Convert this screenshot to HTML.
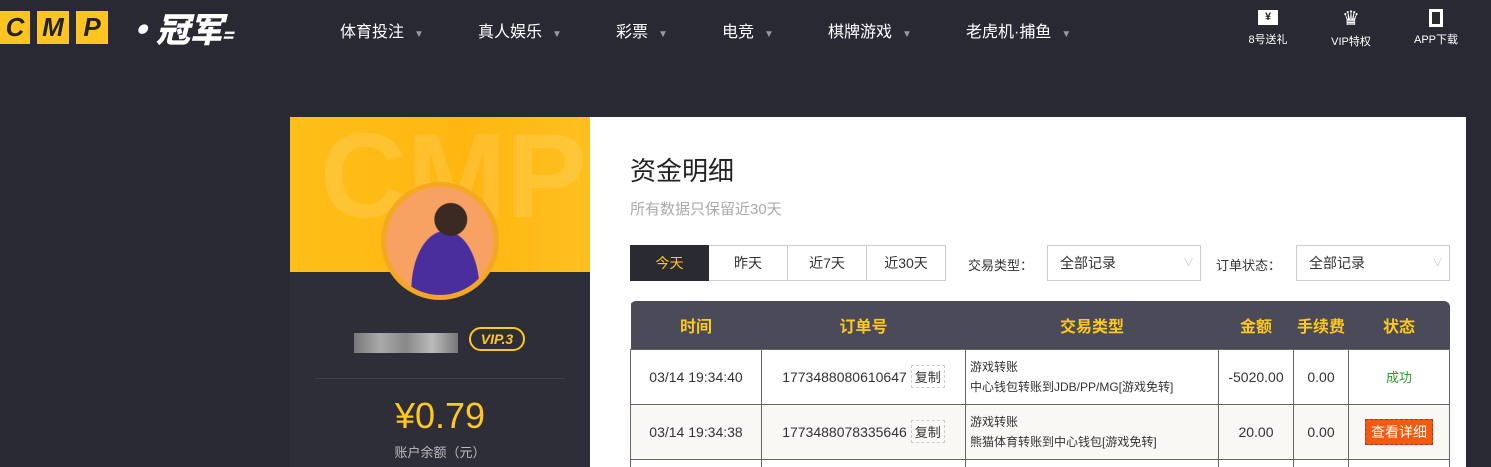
<!DOCTYPE html><html><head><meta charset="utf-8"><style>
*{margin:0;padding:0;box-sizing:border-box}
html{width:1491px;height:467px;overflow:hidden}
body{width:1491px;height:467px;overflow:hidden;background:#292933;font-family:"Liberation Sans","Noto Sans CJK SC",sans-serif;position:relative}
.a{position:absolute}
.nav{color:#fff;font-size:16px;top:18px}
.nav span{font-size:10px;color:#999;margin-left:10px}
.ic{color:#fff;font-size:11px;text-align:center;width:60px;top:8px}
table{border-collapse:collapse;width:820px;font-size:14px;color:#333;table-layout:fixed}
td{border:1px solid #666;text-align:center;height:55px}
th{background:#4a4a58;color:#ffc81e;font-size:16px;height:48px;font-weight:bold}
.t{text-align:left;padding-left:4px;font-size:12px;line-height:20px}
.cp{display:inline-block;border:1px dashed #ccc;padding:1px 3px;margin-left:4px;font-size:13px}
.btn{border:1px solid #ccc;height:36px;line-height:34px;font-size:14px;color:#333;text-align:center}
.lb{width:32px;height:33px;background:#ffc322;font:italic 900 26px 'Liberation Sans';color:#222;text-align:center;line-height:33px}
</style></head><body>
<div class="a" style="left:0;top:11px;display:flex;gap:7px">
<div class="lb" style="width:30px">C</div><div class="lb">M</div><div class="lb">P</div>
<div style="color:#fff;font:italic 900 34px 'Noto Sans CJK SC',sans-serif;line-height:33px;margin-left:8px;letter-spacing:-1px">·冠军<span style="font-size:18px">=</span></div></div>
<div class="a nav" style="left:340px">体育投注<span>▼</span></div>
<div class="a nav" style="left:478px">真人娱乐<span>▼</span></div>
<div class="a nav" style="left:616px">彩票<span>▼</span></div>
<div class="a nav" style="left:722px">电竞<span>▼</span></div>
<div class="a nav" style="left:828px">棋牌游戏<span>▼</span></div>
<div class="a nav" style="left:966px">老虎机·捕鱼<span>▼</span></div>
<div class="a ic" style="left:1238px"><div style="width:20px;height:15px;background:#fff;margin:2px auto 6px;color:#222;font-size:11px;line-height:15px;font-weight:bold">¥</div>8号送礼</div>
<div class="a ic" style="left:1321px"><div style="font-size:20px;line-height:22px;height:25px">♛</div>VIP特权</div>
<div class="a ic" style="left:1406px"><div style="width:14px;height:18px;border:3px solid #fff;margin:1px auto 4px"></div>APP下载</div>
<div class="a" style="left:290px;top:117px;width:300px;height:155px;background:linear-gradient(90deg,#ffbe1a,#ffb610 60%,#ffc020);overflow:hidden"><div style="font:bold 120px 'Liberation Sans';color:rgba(255,255,255,.12);margin:-10px 0 0 30px">CMP</div></div>
<div class="a" style="left:290px;top:272px;width:300px;height:195px;background:#2e2e38"></div>
<div class="a" style="left:381px;top:182px;width:118px;height:118px;border-radius:50%;background:#f5a623;padding:5px"><div style="width:100%;height:100%;border-radius:50%;background:radial-gradient(circle at 60% 30%,#3a2a22 0 16%,transparent 17%),radial-gradient(ellipse at 55% 95%,#4a2e9e 0 40%,transparent 41%),#f7a263"></div></div>
<div class="a" style="left:354px;top:333px;width:104px;height:20px;background:linear-gradient(90deg,#777,#aaa,#888,#bbb,#777)"></div>
<div class="a" style="left:469px;top:327px;width:56px;height:24px;border:2px solid #ffc81e;border-radius:12px;color:#ffc81e;font:italic bold 14px 'Liberation Sans';text-align:center;line-height:20px">VIP.3</div>
<div class="a" style="left:315px;top:378px;width:250px;height:1px;background:#444"></div>
<div class="a" style="left:290px;top:394px;width:300px;text-align:center;color:#ffc81e;font-size:36px;line-height:44px">¥0.79</div>
<div class="a" style="left:290px;top:442px;width:300px;text-align:center;color:#bbb;font-size:13px">账户余额（元）</div>
<div class="a" style="left:590px;top:117px;width:876px;height:350px;background:#fff"></div>
<div class="a" style="left:630px;top:151px;font-size:26px;color:#222">资金明细</div>
<div class="a" style="left:630px;top:198px;font-size:15px;color:#aaa">所有数据只保留近30天</div>
<div class="a" style="left:630px;top:245px;display:flex">
<div class="btn" style="width:79px;background:#2a2a33;color:#ffc81e;border-color:#2a2a33">今天</div>
<div class="btn" style="width:79px;border-left:0">昨天</div><div class="btn" style="width:79px;border-left:0">近7天</div><div class="btn" style="width:79px;border-left:0">近30天</div></div>
<div class="a" style="left:968px;top:255px;font-size:13px;color:#333">交易类型：</div>
<div class="a btn" style="left:1047px;top:245px;width:154px;text-align:left;padding-left:12px">全部记录<span style="float:right;margin-right:6px;color:#ccc;font-size:11px">∨</span></div>
<div class="a" style="left:1216px;top:255px;font-size:13px;color:#333">订单状态：</div>
<div class="a btn" style="left:1296px;top:245px;width:154px;text-align:left;padding-left:12px">全部记录<span style="float:right;margin-right:6px;color:#ccc;font-size:11px">∨</span></div>
<div class="a" style="left:630px;top:301px;height:166px;border-radius:6px 6px 0 0;overflow:hidden"><table>
<tr><th style="width:131px">时间</th><th style="width:204px">订单号</th><th style="width:253px">交易类型</th><th style="width:75px">金额</th><th style="width:55px">手续费</th><th>状态</th></tr>
<tr><td>03/14 19:34:40</td><td>1773488080610647<span class="cp">复制</span></td><td class="t">游戏转账<br>中心钱包转账到JDB/PP/MG[游戏免转]</td><td>-5020.00</td><td>0.00</td><td style="color:#2a9a2a;font-size:13px">成功</td></tr>
<tr style="background:#faf8f4"><td>03/14 19:34:38</td><td>1773488078335646<span class="cp">复制</span></td><td class="t">游戏转账<br>熊猫体育转账到中心钱包[游戏免转]</td><td>20.00</td><td>0.00</td><td><span style="background:#f25a10;color:#fff;padding:4px 5px;border:1px dashed #a33;font-size:14px">查看详细</span></td></tr>
<tr><td style="height:8px"></td><td style="height:8px"></td><td style="height:8px"></td><td style="height:8px"></td><td style="height:8px"></td><td style="height:8px"></td></tr>
</table></div>
</body></html>
